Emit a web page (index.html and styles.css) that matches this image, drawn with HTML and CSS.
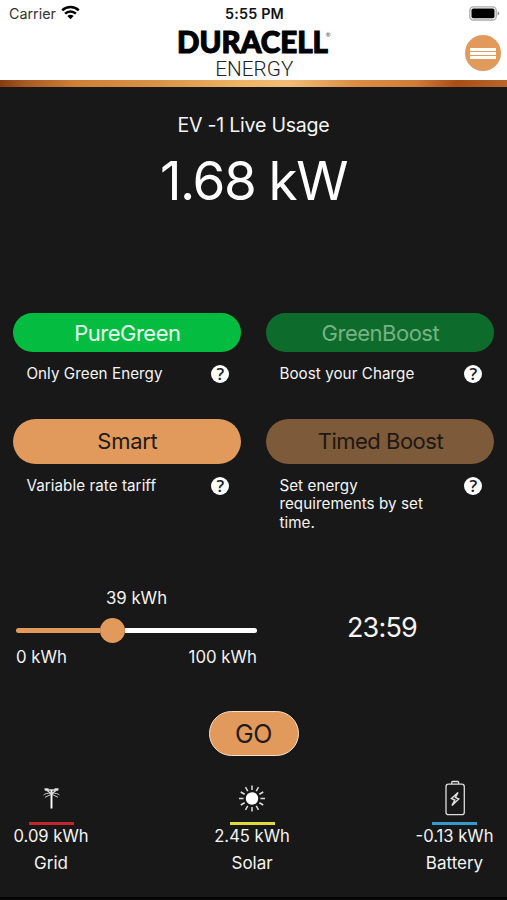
FILE: index.html
```html
<!DOCTYPE html>
<html lang="en">
<head>
<meta charset="utf-8">
<title>Duracell Energy</title>
<link rel="stylesheet" href="styles.css">
</head>
<body>
<header class="header">
  <div class="status">
    <div class="carrier"><span>Carrier</span>
      <svg width="19" height="15" viewBox="0 0 19 15" fill="none" stroke="#000" stroke-width="2.5"><path d="M1.2 5.3a12 12 0 0 1 16.6 0M4.1 8.7a7.8 7.8 0 0 1 10.8 0"/><path d="M9.5 14.2 6.4 11.1a4.4 4.4 0 0 1 6.2 0Z" fill="#000" stroke="none"/></svg>
    </div>
    <div class="clock">5:55 PM</div>
    <svg class="power" width="31" height="15" viewBox="0 0 31 15"><rect x=".8" y=".8" width="26.4" height="13.2" rx="3.6" fill="#fff" stroke="#aaa" stroke-width="1.3"/><rect x="2.5" y="2.5" width="23" height="9.8" rx="1.8"/><path d="M28.6 5.2c2.4.8 2.4 3.6 0 4.4Z" fill="#999"/></svg>
  </div>
  <div class="brand">
    <svg class="logo" width="160" height="62" viewBox="0 -6 160 62">
      <text class="logo-main" x="1" y="25.300" textLength="151" lengthAdjust="spacingAndGlyphs">DURACELL</text>
      <text class="logo-reg" x="149.500" y="9">®</text>
      <text class="logo-sub" x="39.300" y="48" textLength="78" lengthAdjust="spacingAndGlyphs">ENERGY</text>
    </svg>
    <button class="menu" aria-label="Menu"><i></i><i></i><i></i></button>
  </div>
</header>
<div class="copper"></div>
<main class="main">
  <h1 class="title">EV -1 Live Usage</h1>
  <div class="usage">1.68 kW</div>
  <section class="modes">
    <div class="mode">
      <button class="pill green">PureGreen</button>
      <div class="note"><p>Only Green Energy</p><span class="help">?</span></div>
    </div>
    <div class="mode">
      <button class="pill green-off">GreenBoost</button>
      <div class="note"><p>Boost your Charge</p><span class="help">?</span></div>
    </div>
    <div class="mode">
      <button class="pill tall orange">Smart</button>
      <div class="note"><p>Variable rate tariff</p><span class="help">?</span></div>
    </div>
    <div class="mode">
      <button class="pill tall orange-off">Timed Boost</button>
      <div class="note"><p>Set energy requirements by set time.</p><span class="help">?</span></div>
    </div>
  </section>
  <section class="charge">
    <div class="slider">
      <div class="amount">39 kWh</div>
      <div class="track"><div class="fill"></div><div class="thumb"></div><div class="rest"></div></div>
      <div class="limits"><span>0 kWh</span><span>100 kWh</span></div>
    </div>
    <div class="time">23:59</div>
  </section>
  <button class="go">GO</button>
  <footer class="sources">
    <div class="source">
      <svg width="36" height="38" viewBox="0 0 36 38" fill="none" stroke="#ddd"><path d="M18.500 11V29.500" stroke-width="1.900" stroke="#fff"/><path d="M12 11h13M13.500 11l5 4 5-4" stroke-width="1.300"/><path d="M10.500 16c1.500-1.300 3.500-1.900 8-1.900s6.500.6 8 1.900M12 18.300l6.500-3.100 6.500 3.100" stroke-width=".9"/><path d="M11.500 10.300h4M21.500 10.300h4" stroke-width="2"/></svg>
      <div class="line red"></div><div class="num">0.09 kWh</div><div class="name">Grid</div>
    </div>
    <div class="source">
      <svg width="36" height="38" viewBox="0 0 36 38"><circle cx="18" cy="19.500" r="6.200" fill="#fff"/><g stroke="#ddd" stroke-width="1.500" transform="translate(18 19.500)"><path d="M0-13v4.500M0 13V8.500M-13 0h4.500M13 0H8.500"/><path transform="rotate(30)" d="M0-13v4.500M0 13V8.500M-13 0h4.500M13 0H8.500"/><path transform="rotate(60)" d="M0-13v4.500M0 13V8.500M-13 0h4.500M13 0H8.500"/></g></svg>
      <div class="line yellow"></div><div class="num">2.45 kWh</div><div class="name">Solar</div>
    </div>
    <div class="source">
      <svg width="36" height="38" viewBox="0 0 36 38" fill="none" stroke="#ddd" stroke-width="1.300"><rect x="9" y="5.200" width="18.300" height="30.500" rx="2.500"/><path d="M14.700 5V3.500q0-1 1-1h5q1 0 1 1V5"/><path d="m21 13.500-6.500 6 3.300 1.500-2.800 5.500 6.700-6.500-3.300-1.500Z" stroke-width="1.500"/></svg>
      <div class="line blue"></div><div class="num">-0.13 kWh</div><div class="name">Battery</div>
    </div>
  </footer>
</main>
</body>
</html>
```
FILE: styles.css
```css
* { box-sizing: border-box; }
body { margin: 0; width: 507px; height: 900px; overflow: hidden; background: #181818; color: #f4f4f4; font-family: Inter, "Liberation Sans", sans-serif; }
button { border: 0; padding: 0; font: inherit; }
p, h1 { margin: 0; font-weight: 400; }
svg { display: block; flex: none; }

.header { height: 80px; background: #fff; color: #111; }
.status { height: 27px; display: grid; grid-template-columns: 1fr auto 1fr; align-items: center; padding: 0 7px 0 9px; font-size: 14.3px; }
.carrier { display: flex; gap: 5.5px; align-items: center; color: #333; }
.carrier svg { margin-top: -2px; }
.clock { font-weight: 600; letter-spacing: .2px; }
.power { justify-self: end; }
.brand { display: flex; justify-content: space-between; padding: 0 6px 0 176px; }
.logo { font-family: Lato, sans-serif; fill: #000; margin-top: -5px; }
.logo-main { font-weight: 900; font-size: 29.5px; stroke: #000; stroke-width: 1.1px; }
.logo-reg { font-size: 6.5px; fill: #444; }
.logo-sub { font-family: Roboto, sans-serif; font-weight: 300; font-size: 21px; fill: #222; }
.menu { width: 36px; height: 36px; margin-top: 8px; border-radius: 50%; background: #e19a5c; display: flex; flex-direction: column; align-items: center; justify-content: center; gap: 1px; }
.menu i { width: 26px; height: 3px; background: #fff; }
.copper { height: 7px; background: linear-gradient(90deg, #853b10 0, #a75a22 5%, #cf8038 15%, #d89145 30%, #efb568 48%, #f1bd76 57%, #dc8e45 70%, #d07c38 82%, #a94e15 90%, #b8662c 100%); }

.main { height: 813px; padding-top: 25px; display: flex; flex-direction: column; border-bottom: 3px solid #050505; }
.title { text-align: center; font-size: 19.6px; line-height: 26px; letter-spacing: -.25px; }
.usage { text-align: center; font-size: 53px; line-height: 60px; margin-top: 13px; color: #fff; letter-spacing: -1.5px; }
.modes { display: grid; grid-template-columns: 228px 228px; column-gap: 25px; grid-template-rows: 106px 145px; margin: 102px 0 0 13.4px; }
.pill { display: block; width: 100%; height: 39px; border-radius: 23px; font-size: 22px; letter-spacing: -.5px; }
.pill.tall { height: 45px; padding-bottom: 1px; }
.green { background: #04bd40; color: #e9ffef; }
.green-off { background: #0d6c2b; color: #76b286; }
.orange { background: #e19a5c; color: #211b16; letter-spacing: -.3px; }
.orange-off { background: #7d5a39; color: #1e1814; }
.note { display: flex; justify-content: space-between; align-items: flex-start; padding: 12.5px 12px 0 13px; font-size: 15.2px; line-height: 18.5px; }
.note p { width: 160px; letter-spacing: .06px; }
.help { width: 18px; height: 18px; border-radius: 50%; background: #fff; color: #20202a; font: 600 17px/18px "Open Sans", sans-serif; text-align: center; }
.charge { display: flex; justify-content: space-between; padding: 0 90px 0 16px; margin-top: 23px; }
.slider { width: 241px; font-size: 16.8px; line-height: 22px; }
.amount { text-align: center; }
.track { display: flex; align-items: center; height: 25px; margin-top: 9px; }
.fill { flex: 0 0 84px; height: 5px; border-radius: 3px 0 0 3px; background: #e19a5c; }
.thumb { width: 25px; height: 25px; border-radius: 50%; background: #e19a5c; }
.rest { flex: 1; height: 5px; border-radius: 0 3px 3px 0; background: #fff; }
.limits { display: flex; justify-content: space-between; margin-top: 3px; }
.time { font-size: 27px; line-height: 34px; margin-top: 24px; letter-spacing: -.8px; }
.go { align-self: center; width: 90px; height: 45px; margin-top: 43px; border: 1.5px solid #f6e0cc; border-radius: 23px; background: #e19a5c; color: #211b16; font-size: 25px; letter-spacing: -.5px; }
.sources { display: flex; justify-content: space-between; padding: 0 13.5px; margin-top: 23px; }
.source { display: flex; flex-direction: column; align-items: center; font-size: 16.6px; }
.line { width: 45px; height: 3px; margin-top: 5px; }
.red { background: #c4262e; }
.yellow { background: #dfdc39; }
.blue { background: #359bcc; }
.num { line-height: 20px; margin-top: 1px; }
.name { line-height: 22px; margin-top: 6px; font-size: 17px; }
```
